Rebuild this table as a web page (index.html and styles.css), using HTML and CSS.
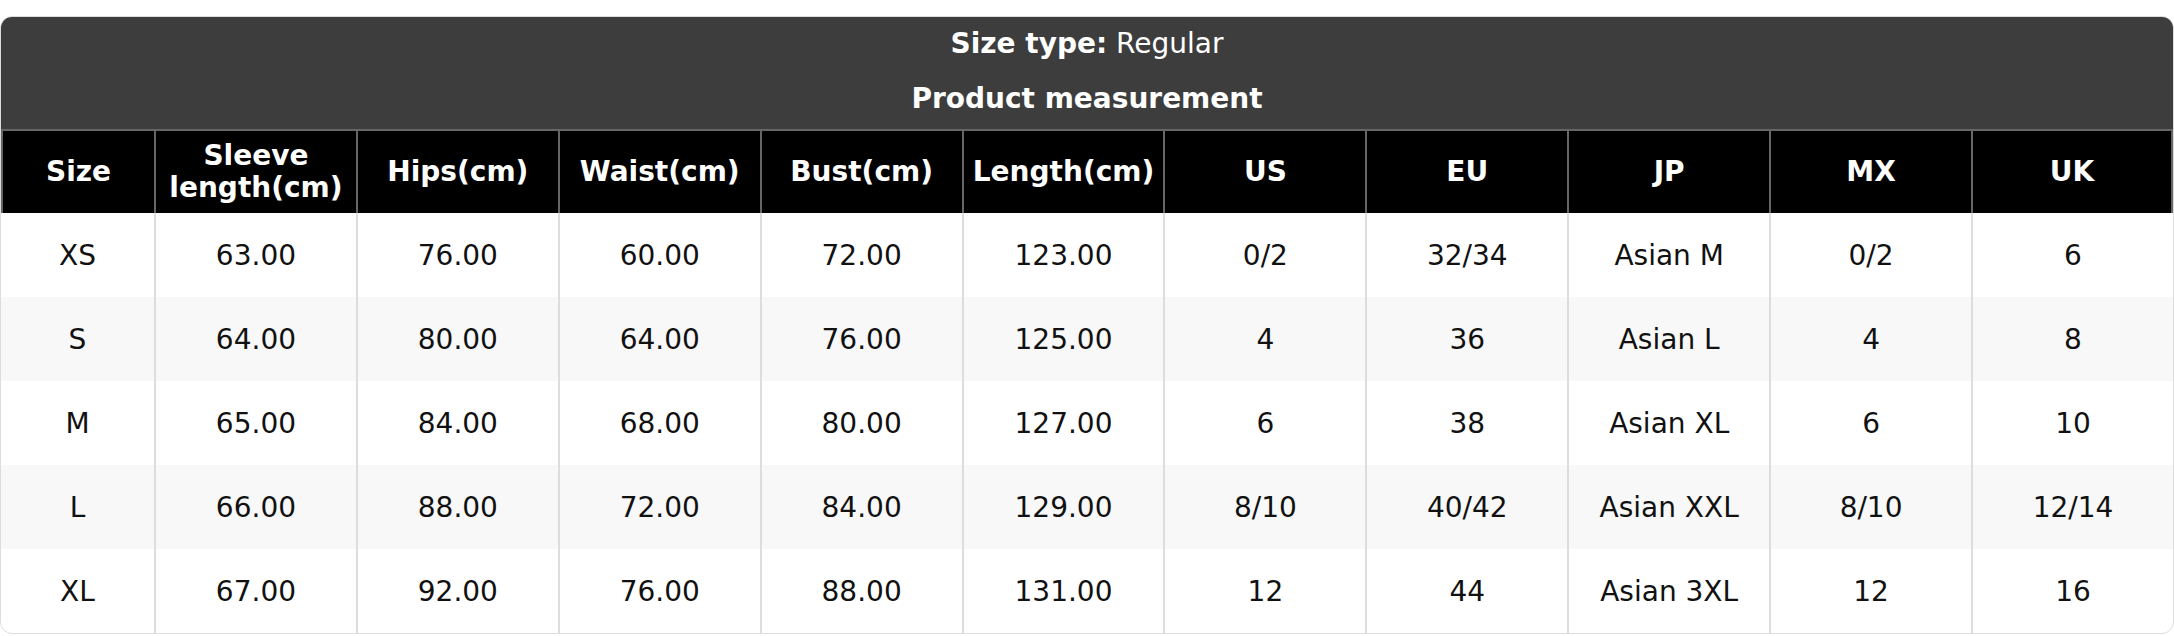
FILE: index.html
```html
<!DOCTYPE html>
<html lang="en">
<head>
<meta charset="utf-8">
<title>Size chart</title>
<link rel="stylesheet" href="styles.css">
</head>
<body>
<div class="page">
  <div class="card">
    <div class="card-head">
      <div class="size-type"><strong>Size type:</strong> Regular</div>
      <div class="measure-title">Product measurement</div>
    </div>
    <table class="chart">
      <colgroup>
        <col class="col-size">
        <col><col><col><col><col><col><col><col><col><col>
      </colgroup>
      <thead>
        <tr>
          <th>Size</th>
          <th>Sleeve length(cm)</th>
          <th>Hips(cm)</th>
          <th>Waist(cm)</th>
          <th>Bust(cm)</th>
          <th>Length(cm)</th>
          <th>US</th>
          <th>EU</th>
          <th>JP</th>
          <th>MX</th>
          <th>UK</th>
        </tr>
      </thead>
      <tbody>
        <tr>
          <td>XS</td><td>63.00</td><td>76.00</td><td>60.00</td><td>72.00</td><td>123.00</td><td>0/2</td><td>32/34</td><td>Asian M</td><td>0/2</td><td>6</td>
        </tr>
        <tr>
          <td>S</td><td>64.00</td><td>80.00</td><td>64.00</td><td>76.00</td><td>125.00</td><td>4</td><td>36</td><td>Asian L</td><td>4</td><td>8</td>
        </tr>
        <tr>
          <td>M</td><td>65.00</td><td>84.00</td><td>68.00</td><td>80.00</td><td>127.00</td><td>6</td><td>38</td><td>Asian XL</td><td>6</td><td>10</td>
        </tr>
        <tr>
          <td>L</td><td>66.00</td><td>88.00</td><td>72.00</td><td>84.00</td><td>129.00</td><td>8/10</td><td>40/42</td><td>Asian XXL</td><td>8/10</td><td>12/14</td>
        </tr>
        <tr>
          <td>XL</td><td>67.00</td><td>92.00</td><td>76.00</td><td>88.00</td><td>131.00</td><td>12</td><td>44</td><td>Asian 3XL</td><td>12</td><td>16</td>
        </tr>
      </tbody>
    </table>
  </div>
</div>
</body>
</html>
```
FILE: styles.css
```css
html, body {
  margin: 0;
  padding: 0;
  background: #ffffff;
}

body {
  font-family: "DejaVu Sans", Verdana, sans-serif;
  color: #111111;
}

.page {
  padding-top: 16px;
}

.card {
  border: 1px solid #dddddd;
  border-radius: 12px;
  overflow: hidden;
  background: #ffffff;
}

.card-head {
  background: #3d3d3d;
  color: #ffffff;
  text-align: center;
  height: 112px;
  box-sizing: border-box;
  padding-top: 7px;
  font-size: 28px;
  line-height: 40px;
}

.size-type strong {
  font-weight: 700;
}

.measure-title {
  font-weight: 700;
  margin-top: 15px;
}

.chart {
  width: 100%;
  table-layout: fixed;
  border-collapse: separate;
  border-spacing: 0;
  font-size: 28px;
}

.col-size {
  width: 153px;
}

.chart th {
  background: #000000;
  color: #ffffff;
  font-weight: 700;
  height: 82px;
  padding: 0 4px;
  line-height: 32px;
  border-top: 2px solid #666666;
  border-left: 2px solid #666666;
  text-align: center;
  vertical-align: middle;
}

.chart th:last-child {
  border-right: 2px solid #666666;
}

.chart td {
  height: 84px;
  padding: 0 4px;
  text-align: center;
  vertical-align: middle;
  border-left: 2px solid #dddddd;
  font-weight: 400;
}

.chart td:first-child {
  border-left: none;
}

.chart tbody tr:nth-child(even) td {
  background: #f8f8f8;
}
```
